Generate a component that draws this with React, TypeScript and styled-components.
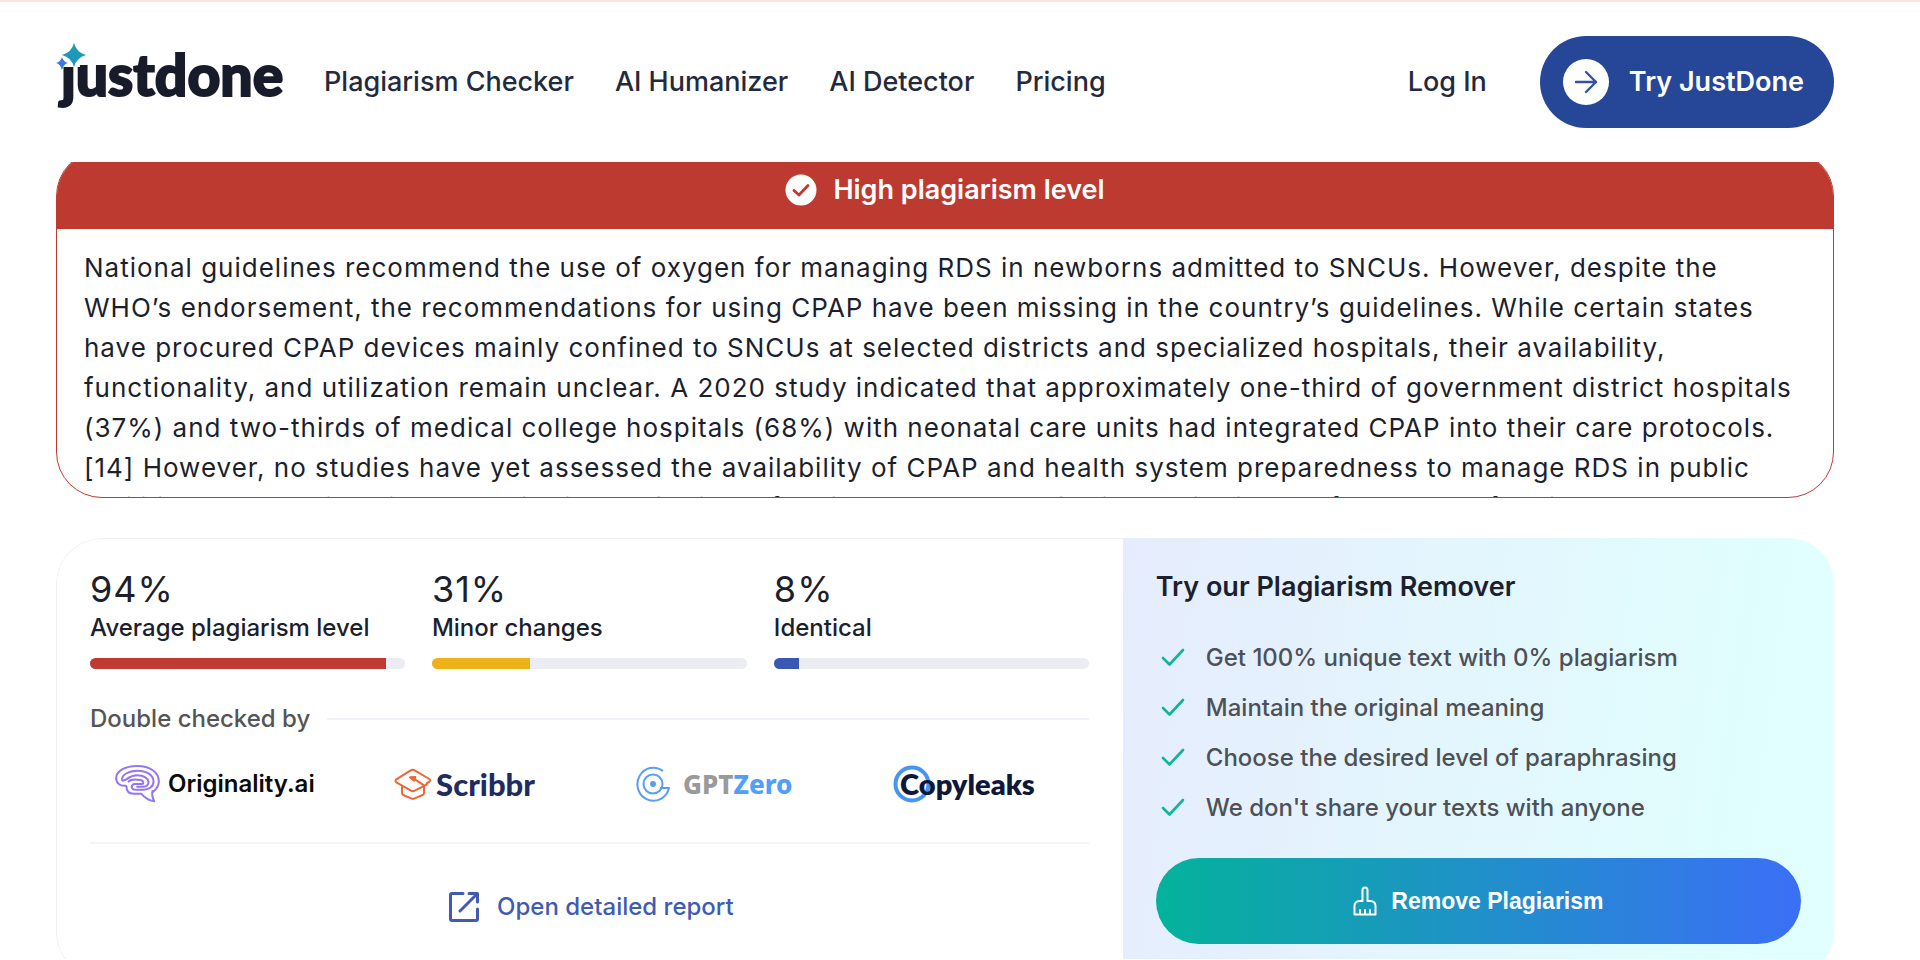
import React from "react";
import styled, { createGlobalStyle } from "styled-components";

const GlobalStyle = createGlobalStyle`
  *, *::before, *::after { box-sizing: border-box; }
  body {
    margin: 0;
    background: #fff;
    color: #1c1f2e;
    font-family: Inter, "Liberation Sans", sans-serif;
  }
  h2, p, ul, dl, dd { margin: 0; padding: 0; }
  a { color: inherit; text-decoration: none; }
  button { border: 0; cursor: pointer; }
`;

const Page = styled.div`
  height: 100vh;
  overflow: hidden;
  border-top: 2px solid #fbe6df;
  border-bottom: 1px solid #fff;
`;

const Header = styled.header`
  position: sticky;
  top: 0;
  z-index: 2;
  display: flex;
  align-items: center;
  height: 160px;
  padding: 0 86px 0 56px;
  background: #fff;
`;

const Logo = styled.a`
  position: relative;
  width: 228px;
  margin-right: 40px;
  padding: 0 0 16px 5px;
  color: #181b2a;
  font: 900 57px/60px Lato, sans-serif;
  -webkit-text-stroke: 2px #181b2a;
`;

const Stars = styled.svg`
  position: absolute;
  left: 0;
  top: -2px;
`;

const Nav = styled.nav`
  display: flex;
  gap: 41px;
  flex: 1;
`;

const NavLink = styled.a`
  font-size: 27px;
  line-height: 32px;
  font-weight: 500;
  color: #232a3d;
  white-space: nowrap;
`;

const TryButton = styled.button`
  display: flex;
  align-items: center;
  gap: 20px;
  height: 92px;
  margin-left: 53px;
  padding: 0 30px 0 23px;
  border-radius: 46px;
  background: #264798;
  color: #fff;
  font: 600 27px/32px Inter, sans-serif;
  white-space: nowrap;
`;

const Main = styled.main`
  display: flex;
  flex-direction: column;
  gap: 40px;
  margin-top: -12px;
  padding: 0 86px 0 56px;
`;

const Excerpt = styled.section`
  height: 348px;
  overflow: hidden;
  border: 1px solid #bf3a30;
  border-radius: 46px;
`;

const Level = styled.h2`
  display: flex;
  align-items: center;
  justify-content: center;
  gap: 16px;
  height: 78px;
  background: #bd3a31;
  color: #fff;
  font-size: 27px;
  line-height: 32px;
  font-weight: 600;
`;

const ExcerptText = styled.p`
  padding: 19px 27px 0;
  font-size: 26px;
  line-height: 40px;
  letter-spacing: 1px;
`;

const Report = styled.section`
  display: grid;
  grid-template-columns: 3fr 2fr;
  height: 440px;
  border-radius: 46px;
  overflow: hidden;
`;

const Summary = styled.div`
  padding: 30px 34px 0 33px;
  border: 1px solid #f0f0f4;
  border-right: 0;
  border-radius: 46px 0 0 46px;
`;

const Stats = styled.dl`
  display: grid;
  grid-template-columns: repeat(3, 1fr);
  gap: 27px;
`;

const Stat = styled.div`
  display: flex;
  flex-direction: column;
`;

const StatValue = styled.dd`
  order: -1;
  font-size: 36px;
  line-height: 40px;
  letter-spacing: 1px;
`;

const StatLabel = styled.dt`
  font-size: 24px;
  line-height: 38px;
  font-weight: 500;
  white-space: nowrap;
`;

const Track = styled.dd`
  height: 11px;
  margin-top: 11px;
  border-radius: 6px;
  background: #ececf3;
  overflow: hidden;
`;

const Fill = styled.div<{ $color: string }>`
  height: 100%;
  background: ${(p) => p.$color};
`;

const Checked = styled.div`
  display: flex;
  align-items: center;
  gap: 17px;
  margin-top: 34px;
  color: #555;
  font-size: 24px;
  line-height: 32px;
  font-weight: 500;
  white-space: nowrap;
  &::after {
    content: "";
    flex: 1;
    height: 2px;
    background: #f1f1fa;
  }
`;

const Partners = styled.ul`
  display: grid;
  grid-template-columns: repeat(4, 1fr);
  justify-items: center;
  align-items: center;
  height: 109px;
  padding: 0 0 10px;
  border-bottom: 2px solid #f4f4f6;
  list-style: none;
`;

const Partner = styled.li<{ $font: string; $color: string; $gap: number }>`
  position: relative;
  display: flex;
  align-items: center;
  gap: ${(p) => p.$gap}px;
  color: ${(p) => p.$color};
  font: ${(p) => p.$font};
`;

const Blue = styled.span`
  color: #519ffa;
`;

const Ring = styled.svg`
  position: absolute;
  left: 0;
  top: 0;
`;

const RingText = styled.span`
  position: relative;
  padding-left: 7px;
`;

const ReportLink = styled.a`
  display: flex;
  align-items: center;
  justify-content: center;
  gap: 17px;
  margin-top: 47px;
  padding-left: 3px;
  color: #3f5bb3;
  font-size: 24px;
  line-height: 32px;
  font-weight: 500;
`;

const Remover = styled.div`
  padding: 32px 33px 0;
  background: linear-gradient(98deg, #e6ecfd 0%, #e0fffe 90%);
`;

const RemoverTitle = styled.h2`
  font-size: 27px;
  line-height: 34px;
  font-weight: 600;
`;

const Benefits = styled.ul`
  margin: 28px 0 0;
  list-style: none;
`;

const Benefit = styled.li`
  display: flex;
  align-items: center;
  gap: 16px;
  height: 50px;
  color: #4d5156;
  font-size: 24px;
  font-weight: 500;
`;

const RemoveButton = styled.button`
  display: flex;
  align-items: center;
  justify-content: center;
  gap: 14px;
  width: 100%;
  height: 86px;
  margin-top: 26px;
  border-radius: 43px;
  background: linear-gradient(90deg, #04b29b, #3b6ff6);
  color: #fff;
  font: 700 23px/28px "Liberation Sans", Arial, sans-serif;
`;

const stats = [
  { value: 94, label: "Average plagiarism level", color: "#bf3a30" },
  { value: 31, label: "Minor changes", color: "#efb118" },
  { value: 8, label: "Identical", color: "#3958b5" },
];

const benefits = [
  "Get 100% unique text with 0% plagiarism",
  "Maintain the original meaning",
  "Choose the desired level of paraphrasing",
  "We don't share your texts with anyone",
];

export default function App() {
  return (
    <Page>
      <GlobalStyle />
      <Header>
        <Logo href="#">
          justdone
          <Stars width="32" height="30" viewBox="0 0 32 30" aria-hidden="true">
            <defs>
              <linearGradient id="star" x1="0" y1="1" x2="1" y2="0">
                <stop offset="0" stopColor="#1c8fd6" />
                <stop offset="1" stopColor="#1ba39c" />
              </linearGradient>
            </defs>
            <rect x="0" y="0" width="24" height="25" fill="#fff" />
            <path d="M18 1Q20.500 10.500 30 13Q20.500 15.500 18 25Q15.500 15.500 6 13Q15.500 10.500 18 1Z" fill="url(#star)" />
            <path d="M6 15Q7.500 20 12 21Q7.500 22 6 28Q4.500 22 0 21Q4.500 20 6 15Z" fill="#3b7ae0" />
          </Stars>
        </Logo>
        <Nav>
          <NavLink href="#">Plagiarism Checker</NavLink>
          <NavLink href="#">AI Humanizer</NavLink>
          <NavLink href="#">AI Detector</NavLink>
          <NavLink href="#">Pricing</NavLink>
        </Nav>
        <NavLink href="#">Log In</NavLink>
        <TryButton>
          <svg width="46" height="46" viewBox="0 0 46 46" aria-hidden="true">
            <circle cx="23" cy="23" r="23" fill="#fff" />
            <path d="M13 23H33M23 13L33 23L23 33" fill="none" stroke="#3152a8" strokeWidth="2.4" strokeLinecap="round" strokeLinejoin="round" />
          </svg>
          Try JustDone
        </TryButton>
      </Header>
      <Main>
        <Excerpt>
          <Level>
            <svg width="32" height="32" viewBox="0 0 32 32" aria-hidden="true">
              <circle cx="16" cy="16" r="15.5" fill="#fff" />
              <path d="M9 16.5L14 21L23 11.5" fill="none" stroke="#bd3a31" strokeWidth="2.8" strokeLinecap="round" strokeLinejoin="round" />
            </svg>
            High plagiarism level
          </Level>
          <ExcerptText>
            National guidelines recommend the use of oxygen for managing RDS in newborns admitted to SNCUs. However, despite the
            WHO’s endorsement, the recommendations for using CPAP have been missing in the country’s guidelines. While certain states
            have procured CPAP devices mainly confined to SNCUs at selected districts and specialized hospitals, their availability,
            functionality, and utilization remain unclear. A 2020 study indicated that approximately one-third of government district
            hospitals (37%) and two-thirds of medical college hospitals (68%) with neonatal care units had integrated CPAP into their
            care protocols. [14] However, no studies have yet assessed the availability of CPAP and health system preparedness to
            manage RDS in public facilities and hospitals in the Aspirational Districts of India. The term “Aspirational Districts”
            refers to 112 of India’s
          </ExcerptText>
        </Excerpt>
        <Report>
          <Summary>
            <Stats>
              {stats.map((s) => (
                <Stat key={s.label}>
                  <StatLabel>{s.label}</StatLabel>
                  <StatValue>{s.value}%</StatValue>
                  <Track>
                    <Fill $color={s.color} style={{ width: `${s.value}%` }} />
                  </Track>
                </Stat>
              ))}
            </Stats>
            <Checked>Double checked by</Checked>
            <Partners>
              <Partner $font="600 24px/32px Inter, sans-serif" $color="#0a0a0a" $gap={8}>
                <svg width="45" height="38" viewBox="0 0 134 114" fill="none" stroke="#9277f2" strokeWidth="6" strokeLinecap="round" strokeLinejoin="round" aria-hidden="true">
                  <path d="M32 62C14 64 3 54 3 39C3 18 30 3 66 3C104 3 131 22 131 49C131 62 125 72 114 80" />
                  <path d="M34 64V66C34 78 42 86 56 86H78C88 98 100 106 117 109C112 98 109 88 112 78" />
                  <path d="M22 46C16 30 42 17 66 17C94 17 115 30 115 50C115 64 102 74 84 74H62C46 74 46 58 60 57H80" />
                  <path d="M22 46C34 50 38 31 66 31C86 31 100 40 100 51C100 59 94 65 84 65H66" />
                  <path d="M40 50C48 42 58 44 68 44C80 44 86 48 84 56" />
                </svg>
                Originality.ai
              </Partner>
              <Partner $font="900 31px/36px Lato, sans-serif" $color="#1f2c5f" $gap={4}>
                <svg width="38" height="32" viewBox="0 0 114 96" fill="none" stroke="#ef6632" strokeWidth="6" strokeLinecap="round" strokeLinejoin="round" aria-hidden="true">
                  <path d="M98 50L62 68Q57 71 51 68L7 43Q2 38 7 34L50 7Q56 3 62 7L106 33Q111 37 106 41L98 46" />
                  <path d="M24 55V74Q24 79 28 81L51 91Q57 94 62 91L86 81Q90 79 90 74V52L64 35" />
                  <path d="M48 28L64 27L60 38Z" fill="#ef6632" />
                </svg>
                Scribbr
              </Partner>
              <Partner $font='800 26px/32px "Noto Sans", sans-serif' $color="#9a9a9a" $gap={13}>
                <svg width="34" height="36" viewBox="0 0 34 36" fill="none" stroke="#5b9df2" strokeWidth="2" strokeLinejoin="round" aria-hidden="true">
                  <path d="M27 5A16 16.5 0 1 0 33 22H24" />
                  <circle cx="17" cy="18" r="9.5" />
                  <circle cx="17" cy="18" r="3" fill="#5b9df2" stroke="none" />
                </svg>
                <span>GPT<Blue>Zero</Blue></span>
              </Partner>
              <Partner $font="800 29px/38px Lato, sans-serif" $color="#0f1839" $gap={0}>
                <Ring width="38" height="38" viewBox="0 0 38 38" aria-hidden="true">
                  <circle cx="19" cy="19" r="16.5" fill="none" stroke="#4796ee" strokeWidth="4" />
                </Ring>
                <RingText>Copyleaks</RingText>
              </Partner>
            </Partners>
            <ReportLink href="#">
              <svg width="32" height="32" viewBox="0 0 32 32" fill="none" stroke="#3f5bb3" strokeWidth="3" strokeLinecap="round" strokeLinejoin="round" aria-hidden="true">
                <path d="M15 2.500H4Q2.500 2.500 2.500 4V28Q2.500 29.500 4 29.500H28Q29.500 29.500 29.500 28V18M21 2.500H29.500V11M29 3L12 20" />
              </svg>
              Open detailed report
            </ReportLink>
          </Summary>
          <Remover>
            <RemoverTitle>Try our Plagiarism Remover</RemoverTitle>
            <Benefits>
              {benefits.map((b) => (
                <Benefit key={b}>
                  <svg width="34" height="34" viewBox="0 0 34 34" aria-hidden="true">
                    <path d="M7 18L13.500 24.500L27 10" fill="none" stroke="#0fb596" strokeWidth="2.600" strokeLinecap="round" strokeLinejoin="round" />
                  </svg>
                  {b}
                </Benefit>
              ))}
            </Benefits>
            <RemoveButton>
              <svg width="24" height="30" viewBox="0 0 24 30" fill="none" stroke="#fff" strokeWidth="2" strokeLinejoin="round" strokeLinecap="round" aria-hidden="true">
                <path d="M9.500 15V4Q9.500 1.500 12 1.500Q14.500 1.500 14.500 4V15H17Q22.500 15 22.500 20V28.500H1.500V20Q1.500 15 7 15H9.500M7 24V28M12 24V28M17 24V28" />
              </svg>
              Remove Plagiarism
            </RemoveButton>
          </Remover>
        </Report>
      </Main>
    </Page>
  );
}
